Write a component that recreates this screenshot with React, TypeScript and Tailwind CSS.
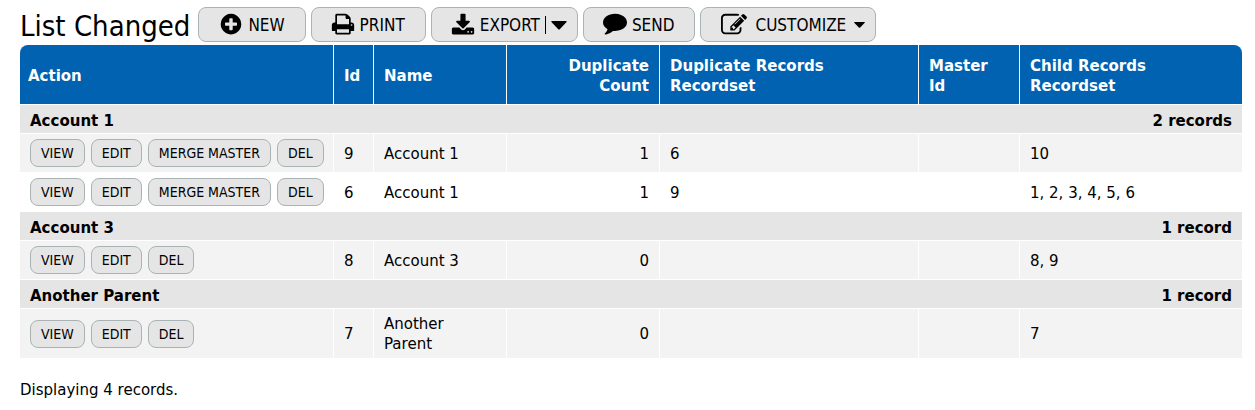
import React from 'react';

interface ListRow {
  id: number;
  name: string;
  duplicates: number;
  duplicateIds: string;
  masterId: string;
  childIds: string;
  canMerge?: boolean;
}

interface Group {
  title: string;
  rows: ListRow[];
}

const groups: Group[] = [
  {
    title: 'Account 1',
    rows: [
      { id: 9, name: 'Account 1', duplicates: 1, duplicateIds: '6', masterId: '', childIds: '10', canMerge: true },
      { id: 6, name: 'Account 1', duplicates: 1, duplicateIds: '9', masterId: '', childIds: '1, 2, 3, 4, 5, 6', canMerge: true },
    ],
  },
  {
    title: 'Account 3',
    rows: [{ id: 8, name: 'Account 3', duplicates: 0, duplicateIds: '', masterId: '', childIds: '8, 9' }],
  },
  {
    title: 'Another Parent',
    rows: [{ id: 7, name: 'Another Parent', duplicates: 0, duplicateIds: '', masterId: '', childIds: '7' }],
  },
];

interface IconShape {
  viewBox: string;
  d: string;
}

const Icon = ({ icon, className = 'size-6' }: { icon: IconShape; className?: string }) => (
  <svg viewBox={icon.viewBox} className={`shrink-0 ${className}`} fill="currentColor" aria-hidden="true">
    <path d={icon.d} />
  </svg>
);

const icons = {
  plus: {
    viewBox: '0 64 1792 1792',
    d: 'M1344 960v-128q0-26-19-45t-45-19h-256v-256q0-26-19-45t-45-19h-128q-26 0-45 19t-19 45v256h-256q-26 0-45 19t-19 45v128q0 26 19 45t45 19h256v256q0 26 19 45t45 19h128q26 0 45-19t19-45v-256h256q26 0 45-19t19-45zm320-64q0 209-103 385.500t-279.500 279.500-385.500 103-385.500-103-279.500-279.500-103-385.500 103-385.500 279.500-279.500 385.500-103 385.500 103 279.500 279.500 103 385.500z',
  },
  print: {
    viewBox: '0 64 1792 1792',
    d: 'M448 1536h896v-256h-896v256zm0-640h896v-384h-160q-40 0-68-28t-28-68v-160h-640v640zm1152 64q0-26-19-45t-45-19-45 19-19 45 19 45 45 19 45-19 19-45zm128 0v416q0 13-9.500 22.500t-22.500 9.500h-224v160q0 40-28 68t-68 28h-960q-40 0-68-28t-28-68v-160h-224q-13 0-22.500-9.500t-9.500-22.500v-416q0-79 56.500-135.500t135.500-56.500h64v-544q0-40 28-68t68-28h672q40 0 88 20t76 48l152 152q28 28 48 76t20 88v256h64q79 0 135.500 56.500t56.500 135.500z',
  },
  download: {
    viewBox: '0 -64 1792 1792',
    d: 'M1344 1344q0-26-19-45t-45-19-45 19-19 45 19 45 45 19 45-19 19-45zm256 0q0-26-19-45t-45-19-45 19-19 45 19 45 45 19 45-19 19-45zm128-224v320q0 40-28 68t-68 28h-1472q-40 0-68-28t-28-68v-320q0-40 28-68t68-28h465l135 136q58 56 136 56t136-56l136-136h464q40 0 68 28t28 68zm-325-569q17 41-14 70l-448 448q-18 19-45 19t-45-19l-448-448q-31-29-14-70 17-39 59-39h256v-448q0-26 19-45t45-19h256q26 0 45 19t19 45v448h256q42 0 59 39z',
  },
  comment: {
    viewBox: '0 192 1792 1792',
    d: 'M1792 896q0 174-120 321.500t-326 233-450 85.500q-70 0-145-8-198 175-460 242-49 14-114 22-17 2-30.500-9t-17.500-29v-1q-3-4-.5-12t2-10 4.500-9.500l6-9 7-8.500 8-9q7-8 31-34.500t34.500-38 31-39.500 32.500-51 27-59 26-76q-157-89-247.500-220t-90.500-281q0-130 71-248.500t191-204.500 286-136.500 348-50.500q244 0 450 85.500t326 233 120 321.500z',
  },
  edit: {
    viewBox: '0 0 1792 1792',
    d: 'M888 1184l116-116-152-152-116 116v56h96v96h56zm440-720q-16-16-33 1l-350 350q-17 17-1 33t33-1l350-350q17-17 1-33zm80 594v190q0 119-84.500 203.500t-203.500 84.500h-832q-119 0-203.500-84.500t-84.500-203.500v-832q0-119 84.500-203.500t203.500-84.500h832q63 0 117 25 15 7 18 23 3 17-9 29l-49 49q-14 14-32 8-23-6-45-6h-832q-66 0-113 47t-47 113v832q0 66 47 113t113 47h832q66 0 113-47t47-113v-126q0-13 9-22l64-64q15-15 35-7t20 29zm-96-738l288 288-672 672h-288v-288zm444 132l-92 92-288-288 92-92q28-28 68-28t68 28l152 152q28 28 28 68t-28 68z',
  },
};

const Caret = ({ className }: { className: string }) => (
  <svg viewBox="0 0 16 9" className={className} fill="currentColor" aria-hidden="true">
    <path d="M1 0h14q1 0 .6 1L9 8q-1 1-2 0L.4 1Q0 0 1 0z" />
  </svg>
);

const toolButton = 'flex h-[35px] items-center rounded-lg border border-[#a9b3b5] bg-[#e5e5e5] pt-px text-[17px] leading-5';

const RowButton = ({ children }: { children: React.ReactNode }) => (
  <button type="button" className="h-7 rounded-lg border border-[#a9b3b5] bg-[#e5e5e5] px-[10px] text-sm leading-4 whitespace-nowrap">
    {children}
  </button>
);

const App: React.FC = () => {
  const total = groups.reduce((sum, group) => sum + group.rows.length, 0);
  const th = 'border-r border-b border-white pt-[11px] pb-2 font-bold last:border-r-0';
  const td = 'border-r border-b border-white px-[10px] last:border-r-0';
  const textCell = `${td} pt-[5px] pb-1`;

  return (
    <main className="bg-white pt-[7px] pr-[13px] pl-5 font-[Verdana,'DejaVu_Sans',sans-serif] text-[15px] leading-5 text-black">
      <header className="flex items-center gap-[5px] pb-[3px] font-['DejaVu_Sans_Condensed','DejaVu_Sans',sans-serif]">
        <h1 className="mr-[3px] pt-1 text-[29px] leading-[31px] whitespace-nowrap">List Changed</h1>
        <button type="button" className={`${toolButton} gap-[5px] px-5`}>
          <Icon icon={icons.plus} /> NEW
        </button>
        <button type="button" className={`${toolButton} gap-[5px] pr-5 pl-[19px]`}>
          <Icon icon={icons.print} /> PRINT
        </button>
        <button type="button" className={`${toolButton} gap-[5px] pr-[10px] pl-[19px]`}>
          <Icon icon={icons.download} /> EXPORT
          <span className="h-[18px] w-px bg-black" />
          <Caret className="w-4" />
        </button>
        <button type="button" className={`${toolButton} gap-[5px] pr-5 pl-[19px]`}>
          <Icon icon={icons.comment} /> SEND
        </button>
        <button type="button" className={`${toolButton} gap-2 pr-[10px] pl-5`}>
          <Icon icon={icons.edit} className="size-[26px]" /> CUSTOMIZE
          <Caret className="w-[11px]" />
        </button>
      </header>

      <table className="w-full table-fixed border-separate border-spacing-0 overflow-hidden rounded-t-lg">
        <colgroup>
          <col className="w-[314px]" />
          <col className="w-[40px]" />
          <col className="w-[133px]" />
          <col className="w-[153px]" />
          <col className="w-[259px]" />
          <col className="w-[101px]" />
          <col />
        </colgroup>
        <thead>
          <tr className="bg-[#0062b1] text-left text-white">
            <th className={`${th} px-2`}>Action</th>
            <th className={`${th} px-[10px]`}>Id</th>
            <th className={`${th} px-[10px]`}>Name</th>
            <th className={`${th} px-[10px] text-right`}>Duplicate Count</th>
            <th className={`${th} px-[10px]`}>Duplicate Records<br />Recordset</th>
            <th className={`${th} px-[10px]`}>Master Id</th>
            <th className={`${th} px-[10px]`}>Child Records<br />Recordset</th>
          </tr>
        </thead>
        {groups.map(group => (
          <tbody key={group.title}>
            <tr className="bg-[#e5e5e5]">
              <th colSpan={7} className="border-b border-white px-[10px] pt-[6px] pb-[2px] font-bold">
                <div className="flex justify-between">
                  <span>{group.title}</span>
                  <span>{group.rows.length} {group.rows.length === 1 ? 'record' : 'records'}</span>
                </div>
              </th>
            </tr>
            {group.rows.map((row, index) => (
              <tr key={row.id} className={index % 2 ? 'bg-white' : 'bg-[#f3f3f3]'}>
                <td className={`${td} py-[5px]`}>
                  <div className="flex gap-[6px] font-['DejaVu_Sans_Condensed','DejaVu_Sans',sans-serif]">
                    <RowButton>VIEW</RowButton>
                    <RowButton>EDIT</RowButton>
                    {row.canMerge && <RowButton>MERGE MASTER</RowButton>}
                    <RowButton>DEL</RowButton>
                  </div>
                </td>
                <td className={textCell}>{row.id}</td>
                <td className={textCell}>{row.name}</td>
                <td className={`${textCell} text-right`}>{row.duplicates}</td>
                <td className={textCell}>{row.duplicateIds}</td>
                <td className={textCell}>{row.masterId}</td>
                <td className={textCell}>{row.childIds}</td>
              </tr>
            ))}
          </tbody>
        ))}
      </table>

      <p className="pt-[21px]">Displaying {total} records.</p>
    </main>
  );
};

export default App;
